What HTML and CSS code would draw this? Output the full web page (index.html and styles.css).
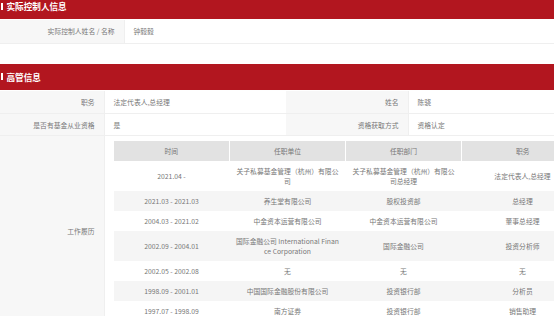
FILE: index.html
```html
<!DOCTYPE html>
<html lang="zh-CN">
<head>
  <meta charset="UTF-8" />
  <title>高管信息</title>
  <link rel="stylesheet" href="styles.css">
</head>
<body>
  <div class="page">
    <div class="sec-title"><span class="mark"></span>实际控制人信息</div>
    <table class="info ctrl">
      <tr>
        <th>实际控制人姓名 / 名称</th>
        <td>钟毅毅</td>
      </tr>
    </table>

    <div class="sec-title second"><span class="mark"></span>高管信息</div>
    <table class="info exec">
      <colgroup>
        <col style="width: 104px">
        <col style="width: 182px">
        <col style="width: 122px">
        <col>
      </colgroup>
      <tr>
        <th>职务</th>
        <td>法定代表人,总经理</td>
        <th>姓名</th>
        <td>陈骁</td>
      </tr>
      <tr>
        <th>是否有基金从业资格</th>
        <td>是</td>
        <th>资格获取方式</th>
        <td>资格认定</td>
      </tr>
      <tr>
        <th>工作履历</th>
        <td colspan="3" class="resume">
          <table class="history">
            <colgroup>
              <col style="width: 116px">
              <col style="width: 116px">
              <col style="width: 116px">
              <col style="width: 122px">
            </colgroup>
            <thead>
              <tr><th>时间</th><th>任职单位</th><th>任职部门</th><th>职务</th></tr>
            </thead>
            <tbody>
              <tr class="tall"><td>2021.04 -</td><td>关子私募基金管理（杭州）有限公司</td><td>关子私募基金管理（杭州）有限公司总经理</td><td>法定代表人,总经理</td></tr>
              <tr><td>2021.03 - 2021.03</td><td>养生堂有限公司</td><td>股权投资部</td><td>总经理</td></tr>
              <tr><td>2004.03 - 2021.02</td><td>中金资本运营有限公司</td><td>中金资本运营有限公司</td><td>董事总经理</td></tr>
              <tr class="tall"><td>2002.09 - 2004.01</td><td>国际金融公司 International Finance Corporation</td><td>国际金融公司</td><td>投资分析师</td></tr>
              <tr><td>2002.05 - 2002.08</td><td>无</td><td>无</td><td>无</td></tr>
              <tr><td>1998.09 - 2001.01</td><td>中国国际金融股份有限公司</td><td>投资银行部</td><td>分析员</td></tr>
              <tr><td>1997.07 - 1998.09</td><td>南方证券</td><td>投资银行部</td><td>销售助理</td></tr>
            </tbody>
          </table>
        </td>
      </tr>
    </table>
  </div>
</body>
</html>
```

FILE: styles.css
```css
* {
  box-sizing: border-box;
  margin: 0;
  padding: 0;
}

html,
body {
  overflow: hidden;
}

body {
  background-color: #fff;
  font-family: "Noto Sans CJK SC", "Noto Sans", sans-serif;
  font-size: 6.8px;
  color: #777;
}

.page {
  width: 600px;
  margin-top: -7px;
}

.sec-title {
  height: 26px;
  background-color: #b2161f;
  color: #fff;
  font-size: 8.6px;
  font-weight: bold;
  display: flex;
  align-items: center;
  padding-left: 1px;
}

.sec-title .mark {
  width: 1.5px;
  height: 7px;
  background-color: #fff;
  margin-right: 4px;
}

.sec-title.second {
  margin-top: 20px;
}

.info {
  width: 100%;
  border-collapse: collapse;
  table-layout: fixed;
  margin-top: 1px;
}

.info > tbody > tr > th,
.info > tr > th {
  background-color: #f7f7f7;
  font-weight: normal;
  color: #777;
  text-align: right;
  padding-right: 9px;
  border-right: 1px solid #efefef;
  border-bottom: 1px solid #efefef;
}

.info > tbody > tr > td,
.info > tr > td {
  text-align: left;
  padding-left: 9px;
  border-bottom: 1px solid #efefef;
}

.ctrl th {
  width: 124px;
}

.ctrl tr {
  height: 23px;
}

.exec > tbody > tr:first-child {
  height: 23px;
}

.exec > tbody > tr:nth-child(2) {
  height: 22px;
}

.exec td.resume {
  padding: 5px 0 4px 9px;
}

.history {
  width: 470px;
  border-collapse: collapse;
  table-layout: fixed;
}

.history th {
  background-color: #e2e2e2;
  font-weight: normal;
  color: #777;
  height: 20px;
  text-align: center;
  border-left: 1px solid #fff;
}

.history th:first-child {
  border-left: none;
}

.history td {
  height: 20px;
  padding: 0 6px;
  line-height: 10px;
  text-align: center;
  word-break: break-all;
}

.history tr.tall td {
  height: 30px;
}

.history tbody tr:nth-child(even) td {
  background-color: #f5f5f5;
}
```
